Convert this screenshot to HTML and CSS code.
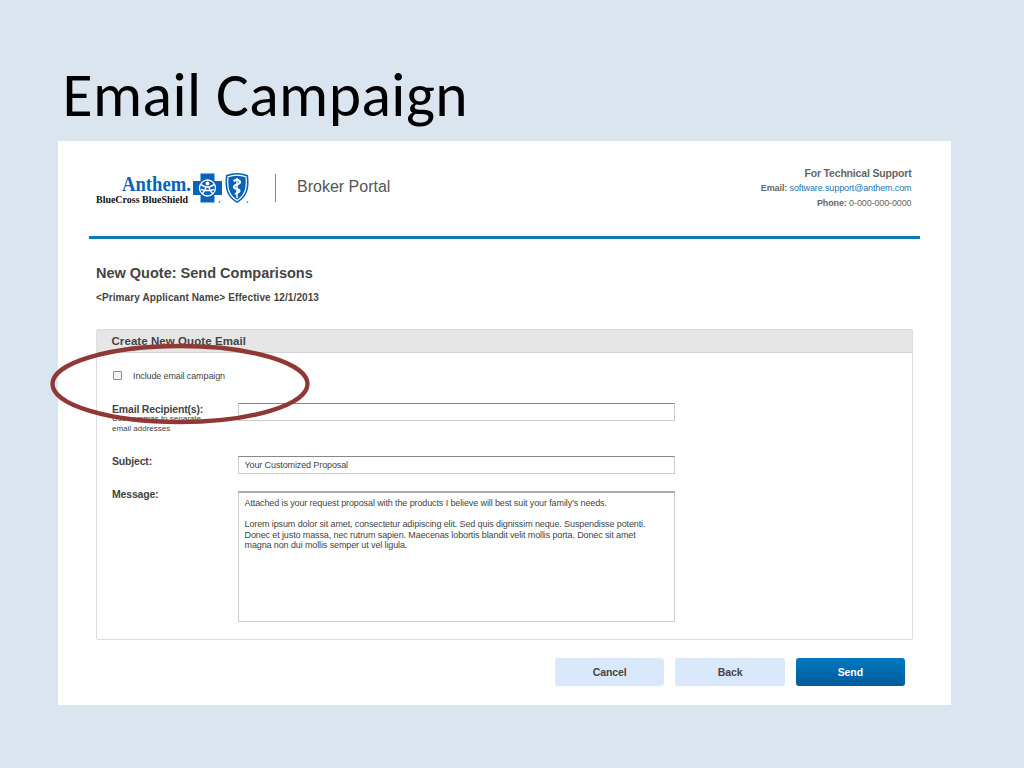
FILE: index.html
```html
<!DOCTYPE html>
<html lang="en">
<head>
    <meta charset="UTF-8">
    <meta name="viewport" content="width=device-width, initial-scale=1.0">
    <title>Email Campaign</title>
    <link rel="stylesheet" href="styles.css">
</head>

<body>
    <h1 class="slide-title">Email Campaign</h1>

    <div class="portal">
        <div class="header">
            <svg class="logo" width="156" height="36" viewBox="0 0 156 36">
                <text class="logo-name" x="26" y="19" textLength="69" lengthAdjust="spacingAndGlyphs">Anthem.</text>
                <text class="logo-sub" x="0" y="30.5" textLength="92" lengthAdjust="spacingAndGlyphs">BlueCross BlueShield</text>
                <!-- cross -->
                <path fill="#0b63b8" d="M104.500 1.500h14v7.500h7.500v14h-7.500v7.500h-14v-7.500h-7.500v-14h7.500z"/>
                <circle cx="111.500" cy="16" r="8" fill="#0b63b8" stroke="#fff" stroke-width="1.300"/>
                <circle cx="111.500" cy="11.500" r="1.900" fill="#fff"/>
                <path fill="none" stroke="#fff" stroke-width="1.400" d="M104.500 12.500l5 2.500h4l5-2.500M110 15l-1 3.500-3 3.500M113 15l1 3.500 3 3.500M109 18.500h5M105 17.500l4 1M118 17.500l-4 1"/>
                <!-- shield -->
                <path fill="#0b63b8" d="M130 3q11-4 22 0c1.500 12 .5 21.500-11 28C129.500 24.500 128.500 15 130 3z"/>
                <path fill="none" stroke="#fff" stroke-width="1.200" d="M132 4.800q9-3.300 18 0c1 10.500 0 18-9 23.700-9-5.700-10-13.200-9-23.700z"/>
                <path stroke="#fff" stroke-width="1.500" d="M141 6v20"/>
                <path fill="none" stroke="#fff" stroke-width="2.200" d="M137.500 9q6-2.500 6.500 1c0 3-6 2-6 5 0 2.500 5.500 1.500 5.500 4 0 2-4 1.500-4 3.500"/>
                <circle cx="123.500" cy="30" r=".8" fill="#0b63b8"/>
                <circle cx="151.500" cy="30" r=".8" fill="#0b63b8"/>
            </svg>
            <div class="portal-name">Broker Portal</div>
            <div class="support">
                <div class="support-title">For Technical Support</div>
                <div class="support-email"><b>Email:</b> <a href="#">software.support@anthem.com</a></div>
                <div class="support-phone"><b>Phone:</b> 0-000-000-0000</div>
            </div>
        </div>

        <div class="content">
            <h2>New Quote: Send Comparisons</h2>
            <p class="applicant">&lt;Primary Applicant Name&gt; Effective 12/1/2013</p>

            <form class="panel">
                <div class="panel-title"><span>Create New Quote Email</span></div>
                <div class="campaign">
                    <input type="checkbox" id="campaign">
                    <label for="campaign">Include email campaign</label>
                    <svg class="highlight" width="260" height="82" viewBox="0 0 260 82">
                        <ellipse cx="130" cy="41" rx="127.500" ry="38" fill="none" stroke="#913735" stroke-width="4.300"/>
                    </svg>
                </div>
                <div class="row recipient-row">
                    <label for="recipients"><span class="label-text">Email Recipient(s):</span>
                        <small>Use commas to separate<br>email addresses</small></label>
                    <input type="text" id="recipients">
                </div>
                <div class="row subject-row">
                    <label for="subject"><span class="label-text">Subject:</span></label>
                    <input type="text" id="subject" value="Your Customized Proposal">
                </div>
                <div class="row message-row">
                    <label><span class="label-text">Message:</span></label>
                    <div class="message">
                        <p>Attached is your request proposal with the products I believe will best suit your family’s needs.</p>
                        <p>Lorem ipsum dolor sit amet, consectetur adipiscing elit. Sed quis dignissim neque. Suspendisse potenti.<br>
                        Donec et justo massa, nec rutrum sapien. Maecenas lobortis blandit velit mollis porta. Donec sit amet<br>
                        magna non dui mollis semper ut vel ligula.</p>
                    </div>
                </div>
            </form>

            <div class="buttons">
                <button type="button">Cancel</button>
                <button type="button">Back</button>
                <button type="button" class="send">Send</button>
            </div>
        </div>
    </div>
</body>
</html>
```

FILE: styles.css
```css
* {
    box-sizing: border-box;
}

body {
    margin: 0;
    height: 768px;
    overflow: hidden;
    background-color: #dbe5ef;
    font-family: "Liberation Sans", Arial, sans-serif;
    color: #444;
}

.slide-title {
    margin: 0;
    padding: 55px 0 0 62.5px;
    height: 140.5px;
    font-family: Carlito, Lato, sans-serif;
    font-size: 61.5px;
    font-weight: 400;
    letter-spacing: 0.45px;
    line-height: 81px;
    color: #000;
    white-space: nowrap;
}

.portal {
    width: 892.5px;
    height: 564.5px;
    margin-left: 58px;
    padding: 0 31px;
    background-color: #fff;
}

/* header */
.header {
    display: flex;
    height: 98px;
    padding: 0 8px 0 7px;
    border-bottom: 3px solid #0d7bba;
}

.logo {
    margin-top: 31.5px;
    flex: none;
}

.logo-name {
    font-family: "Liberation Serif", serif;
    font-size: 20px;
    font-weight: bold;
    fill: #0b63b8;
}

.logo-sub {
    font-family: "Liberation Serif", serif;
    font-size: 9.5px;
    font-weight: bold;
    fill: #111;
}

.portal-name {
    height: 28px;
    margin: 33.5px 0 0 23px;
    padding-left: 21px;
    border-left: 1px solid #888;
    font-size: 16px;
    line-height: 26px;
    color: #555;
}

.support {
    margin: 25px 0 0 auto;
    font-size: 9px;
    line-height: 15px;
    letter-spacing: -0.12px;
    text-align: right;
    color: #666;
}

.support-title {
    font-size: 10.5px;
    font-weight: bold;
    letter-spacing: -0.17px;
}

.support a {
    color: #1b75b0;
    text-decoration: none;
}

/* page content */
.content {
    padding: 0 7px;
}

h2 {
    margin: 0;
    padding-top: 24.5px;
    font-size: 14.5px;
    line-height: 20px;
    color: #444;
}

.applicant {
    margin: 8px 0 0;
    font-size: 10px;
    font-weight: bold;
    line-height: 14px;
    letter-spacing: 0.1px;
}

.panel {
    width: 816.5px;
    height: 311px;
    margin-top: 24px;
    border: 1px solid #ddd;
    border-radius: 2px;
}

.panel-title {
    height: 23px;
    padding-left: 14.5px;
    background-color: #e6e6e6;
    border-bottom: 1px solid #d4d4d4;
    font-size: 11.5px;
    font-weight: bold;
    letter-spacing: 0.07px;
    line-height: 23px;
}

.campaign {
    position: relative;
    display: flex;
    align-items: center;
    gap: 11px;
    height: 46px;
    padding: 0 0 1px 16px;
    font-size: 9px;
    letter-spacing: -0.12px;
}

.campaign input {
    appearance: none;
    width: 9px;
    height: 9px;
    margin: 0;
    border: 1px solid #888;
    border-radius: 1px;
    background-color: #f6f6f6;
}

.highlight {
    position: absolute;
    left: -47px;
    top: -10px;
}

.row {
    display: flex;
    padding-left: 15px;
}

.row label {
    width: 126px;
}

.label-text {
    display: block;
    width: max-content;
    font-size: 10.5px;
    font-weight: bold;
    letter-spacing: -0.18px;
    line-height: 11px;
}

.row small {
    display: block;
    font-size: 8px;
    line-height: 9.5px;
}

.row input,
.message {
    width: 437px;
    border: 1px solid #ccc;
    font-family: inherit;
    font-size: 9px;
    letter-spacing: -0.115px;
    color: #444;
}

.row input {
    height: 18px;
    padding: 0 5.5px 1px;
    border-top-color: #888;
}

.recipient-row {
    height: 53px;
    padding-top: 4px;
}

.recipient-row .label-text {
    line-height: 12px;
}

.recipient-row small {
    margin-top: -1px;
}

.subject-row {
    height: 39px;
    padding-top: 4px;
}

.message-row .label-text {
    margin-top: -2px;
}

.message {
    height: 131px;
    padding: 5px 0 0 5.5px;
    border-top: 2px solid #aaa;
    line-height: 10.7px;
    white-space: nowrap;
}

.message p {
    width: max-content;
    margin: 0 0 10.3px;
}

/* buttons */
.buttons {
    display: flex;
    justify-content: flex-end;
    gap: 11px;
    padding: 18px 7.5px 0 0;
}

.buttons button {
    width: 109.3px;
    height: 28px;
    border: none;
    border-radius: 3px;
    background-color: #dae8fb;
    font-family: inherit;
    font-size: 10.5px;
    font-weight: bold;
    letter-spacing: -0.1px;
    color: #444;
}

.buttons .send {
    background: linear-gradient(#0079c1, #005b9a);
    color: #fff;
}
```
